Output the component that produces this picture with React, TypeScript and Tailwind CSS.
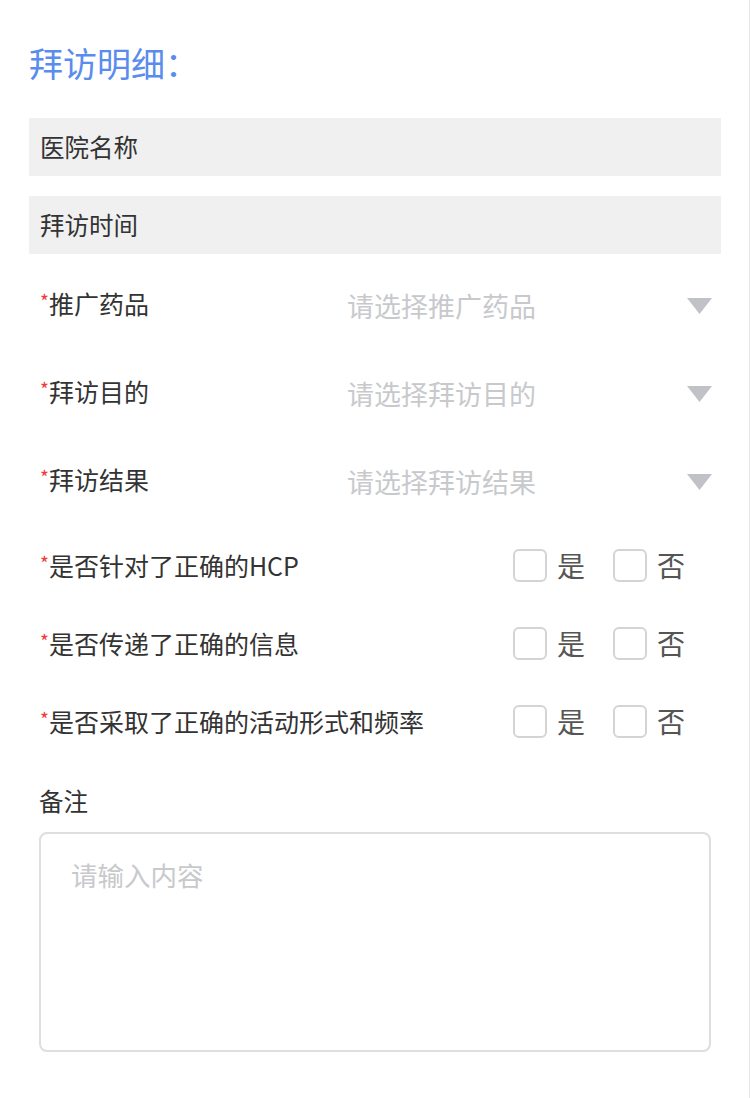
const font = { fontFamily: '"Noto Sans CJK SC", "Noto Sans", sans-serif' }

const selects = [
  { label: "推广药品", placeholder: "请选择推广药品" },
  { label: "拜访目的", placeholder: "请选择拜访目的" },
  { label: "拜访结果", placeholder: "请选择拜访结果" },
]

const checks = ["是否针对了正确的HCP", "是否传递了正确的信息", "是否采取了正确的活动形式和频率"]

const Required = ({ text }: { text: string }) => (
  <div className="flex items-center text-[25px] leading-[30px] text-[#333]">
    <span className="text-[#ee3b3b] text-[19px] leading-[19px] self-start mt-[3px]">*</span>
    <span>{text}</span>
  </div>
)

const Box = ({ text }: { text: string }) => (
  <div className="flex items-center">
    <div className="w-[34px] h-[33px] rounded-[6px] border-2 border-[#d4d4d4] bg-white" />
    <span className="ml-[10px] text-[28px] leading-[34px] text-[#555]">{text}</span>
  </div>
)

export default function App() {
  return (
    <div className="w-[750px] min-h-[1098px] bg-white border-r border-[#e6e6e6]" style={font}>
      <div className="pl-[29px] pr-[28px] pt-[44px]">
        <h1 className="text-[34px] leading-[38px] text-[#5a8cee] font-normal">拜访明细：</h1>

        <div className="mt-[36px] h-[58px] bg-[#f0f0f0] flex items-center pl-[11px] text-[24.5px] text-[#333]">
          医院名称
        </div>
        <div className="mt-[20px] h-[58px] bg-[#f0f0f0] flex items-center pl-[11px] text-[24.5px] text-[#333]">
          拜访时间
        </div>

        <div className="mt-[8px]">
          {selects.map((s) => (
            <div key={s.label} className="h-[88px] flex items-center pl-[11px] pr-[9px]">
              <div className="w-[307px] -mt-[6px]">
                <Required text={s.label} />
              </div>
              <div className="flex-1 text-[27px] text-[#c8c9cc]">{s.placeholder}</div>
              <svg width="25" height="16" viewBox="0 0 25 16">
                <path d="M0 0 H25 L12.5 16 Z" fill="#c0c2c7" />
              </svg>
            </div>
          ))}
        </div>

        {checks.map((c) => (
          <div key={c} className="h-[78px] flex items-center pl-[11px]">
            <div className="w-[473px]">
              <Required text={c} />
            </div>
            <Box text="是" />
            <div className="ml-[28px]">
              <Box text="否" />
            </div>
          </div>
        ))}

        <div className="pl-[10px] pr-[10px] pt-[28px]">
          <div className="text-[24.5px] leading-[26px] text-[#333]">备注</div>
          <div className="mt-[18px] h-[220px] rounded-[8px] border-2 border-[#dedede] px-[30px] pt-[26px] text-[26.5px] leading-[30px] text-[#c8c9cc]">
            请输入内容
          </div>
        </div>
      </div>
    </div>
  )
}
